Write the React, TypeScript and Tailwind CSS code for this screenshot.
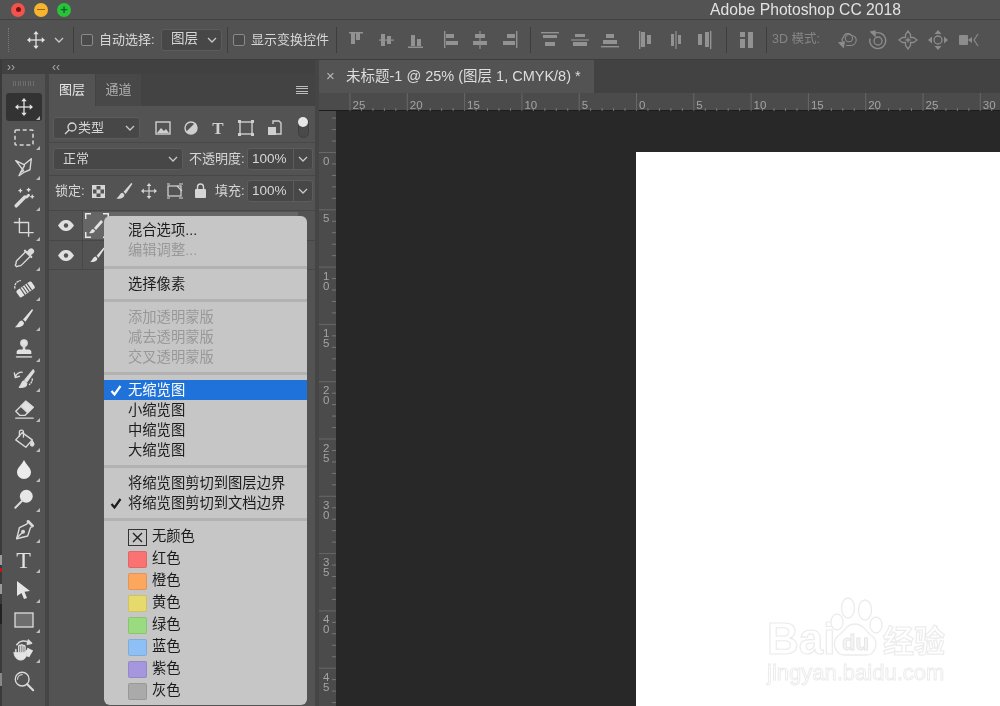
import React from "react";

const Chevron = ({ c = "#c8c8c8" }: { c?: string }) => (
  <svg width="10" height="6" viewBox="0 0 10 6" fill="none" stroke={c} strokeWidth="1.3"><path d="M1 1l4 4 4-4" /></svg>
);

const MoveIcon = ({ size = 20, c = "#e4e4e4" }: { size?: number; c?: string }) => (
  <svg width={size} height={size} viewBox="0 0 20 20" fill={c}>
    <rect x="9.300" y="3" width="1.400" height="14" />
    <rect x="3" y="9.300" width="14" height="1.400" />
    <path d="M10 0l3 3.600H7zM10 20l3-3.600H7zM0 10l3.600-3v6zM20 10l-3.600-3v6z" />
  </svg>
);

const S = ({ children, w = 22 }: { children: React.ReactNode; w?: number }) => (
  <svg width={w} height={w} viewBox="0 0 24 24" fill="none" stroke="#dadada" strokeWidth="1.500" strokeLinejoin="round" strokeLinecap="round">{children}</svg>
);

const Brush = ({ w = 22, c = "#e2e2e2" }: { w?: number; c?: string }) => (
  <svg width={w} height={w} viewBox="0 0 24 24" fill={c}>
    <path d="M21 2L11.500 13l2.500 2.500L22 3.500z" />
    <path d="M10.500 14c-3.500 0-3.500 4-7.500 7 5 1 9.500-1 9.500-4.500z" />
  </svg>
);

const tools: React.ReactNode[] = [
  <MoveIcon size={18} />,
  <svg width="20" height="17" viewBox="0 0 20 17" fill="none" stroke="#d8d8d8" strokeWidth="1.500"><rect x="1" y="1" width="18" height="15" rx="1" strokeDasharray="4 2.700" /></svg>,
  <S><path d="M3 5l9 4.500L20 3l-1.500 12-6 2.500-6 4 2-4 3-1.500z" /><path d="M8.500 17.500l4-7" /></S>,
  <S><path d="M3.500 20.500L13 11" strokeWidth="3.800" /><path d="M15 11l2-2" strokeWidth="3" /><path d="M17 1.500v3M15.500 3h3M8 2.500v3M6.500 4h3M21 9v3M19.500 10.500h3" /></S>,
  <S><path d="M7 1.500V17h15" /><path d="M1.500 6H17v15" /></S>,
  <S><path d="M14 5l-9.500 9.500c-1.500 1.500-1 3-1 3l-1 2.500 1.500 1.500 2.500-1s1.500.5 3-1L19 10" /><path d="M13 4l7 7M15.500 6.500l3-3.500c2-1.500 4.500 1 3 3L18 9" fill="#dadada" strokeWidth="2.200" /></S>,
  <S><g transform="rotate(-35 14 14)"><rect x="4" y="9" width="20" height="9" rx="2" fill="#e2e2e2" stroke="none" /><path d="M10 9.500v8M13 9.500v8M16 9.500v8M19 9.500v8" stroke="#535353" strokeWidth="1.200" /></g><path d="M2 12a7 7 0 0 1 6-8" strokeDasharray="1.500 2" /></S>,
  <Brush w={23} />,
  <S><circle cx="12" cy="5.500" r="3.500" fill="#e2e2e2" /><path d="M12 8v5" strokeWidth="2.800" /><path d="M4 15c0-2 2-2.500 4-2.500h8c2 0 4 .5 4 2.500v2.500H4z" fill="#e2e2e2" stroke="none" /><path d="M4 20.500h16" strokeWidth="2" stroke="#bcbcbc" /></S>,
  <S><path d="M22 2l-9 11 2 2 8-11z" fill="#e2e2e2" /><path d="M12 14c-2.500 0-2 4-5 7 5 .5 8-1 8-4z" fill="#e2e2e2" /><path d="M10 4.500C6 4.500 3.500 6.500 2.500 10M1.500 5.500l1 5 4.500-1.500" /><path d="M21 12c0 3-1 4-3 6" strokeDasharray="1.200 2" /></S>,
  <S><path d="M14 3.500l8 6.500-9 9H7.500L3 14.500z" /><path d="M14 3.500l8 6.500-6 6-7.500-7z" fill="#e2e2e2" /><path d="M3 22h19" /></S>,
  <S><path d="M10 5l11 8-7 8-11-8z" /><path d="M7 9V4.500a2.200 2.200 0 0 1 4.400 0V10" /><path d="M21 14c.8 1.600 2.200 2.800 1.500 4.500-1 2-3.500 1-3.200-1 .1-1.200 1-2.200 1.700-3.500z" fill="#e2e2e2" /></S>,
  <svg width="16" height="19" viewBox="0 0 16 19" fill="#ececec"><path d="M8 0c2.500 5 7 8 7 12.300a7 6.700 0 0 1-14 0C1 8 5.500 5 8 0z" /></svg>,
  <S><circle cx="14.500" cy="9" r="7" fill="#e6e6e6" stroke="none" /><path d="M10 14L2.500 21.500" strokeWidth="2.200" /></S>,
  <S><path d="M17 2l5 5-3 2.500-3 9-12 3 3-12 8-4z" /><path d="M4 21l6-6" /><circle cx="11" cy="14" r="1.400" fill="#dadada" /><path d="M16 2.500l5.500 5.500" strokeWidth="2.400" /></S>,
  <span className="[font-family:'Liberation_Serif',serif] text-[24px] leading-none text-[#e2e2e2]">T</span>,
  <svg width="15" height="18" viewBox="0 0 15 18" fill="#e6e6e6"><path d="M1 0l13 10-5.500.8L11 17l-3 1-2.500-6L1 15z" /></svg>,
  <svg width="20" height="16" viewBox="0 0 20 16"><rect x="1" y="1" width="18" height="14" fill="#6e6e6e" stroke="#dedede" strokeWidth="1.300" /></svg>,
  <S w={23}><path d="M4 14v-3M7 15V7.500c0-1.500 2.200-1.500 2.200 0M9.200 14V7c0-1.500 2.200-1.500 2.200 0M11.400 14V8c0-1.500 2.200-1.500 2.200 0v7" /><path d="M2 14c0 4 3 8 7 8s6-3 6.500-7L17 11v-1L13 14H3z" fill="#e4e4e4" strokeWidth="1" /><path d="M5 6a9 9 0 0 1 13-2" strokeWidth="1.600" /><path d="M17 1l3.500 3.500-4.500 1z" fill="#dadada" /><path d="M16 9l6 3-4 7-3-1z" fill="#e4e4e4" stroke="none" /></S>,
  <S><circle cx="10" cy="10" r="7.500" /><path d="M5 10a5 5 0 0 1 5-5" strokeWidth="1.200" /><path d="M15.500 15.500l6.500 6.500" strokeWidth="2.300" /></S>,
];

const A = ({ rects, line, dim = "#929292" }: { rects: number[][]; line?: number[]; dim?: string }) => (
  <svg width="20" height="20" viewBox="0 0 20 20" fill={dim}>
    {rects.map((r, i) => <rect key={i} x={r[0]} y={r[1]} width={r[2]} height={r[3]} />)}
    {line && <rect x={line[0]} y={line[1]} width={line[2]} height={line[3]} />}
  </svg>
);

const Cell = ({ children, ml = 0 }: { children: React.ReactNode; ml?: number }) => (
  <div className="flex h-5 w-[20px] shrink-0 items-center justify-center" style={{ marginLeft: ml }}>{children}</div>
);

const Sep = ({ ml }: { ml: number }) => <div className="h-[26px] w-px shrink-0 bg-[#3d3d3d]" style={{ marginLeft: ml }} />;

const Check = () => <div className="h-[12px] w-[12px] shrink-0 rounded-[2px] border border-[#8a8a8a] bg-[#4a4a4a]" />;

const field = "rounded-[3px] border border-[#5c5c5c] bg-[#474747]";

const PanelIcon = ({ children }: { children: React.ReactNode }) => (
  <svg width="18" height="18" viewBox="0 0 18 18" fill="none" stroke="#cfcfcf" strokeWidth="1.400">{children}</svg>
);

const Eye = () => (
  <svg width="16" height="11" viewBox="0 0 16 11"><path d="M0 5.500C3 1 5.500 0 8 0s5 1 8 5.500C13 10 10.500 11 8 11S3 10 0 5.500z" fill="#e0e0e0" /><circle cx="8" cy="5.500" r="2.200" fill="#535353" /></svg>
);

function HRuler() {
  const zero = 317;
  const labels = [25, 20, 15, 10, 5, 0, 5, 10, 15, 20, 25, 30];
  return (
    <svg width="681" height="18" className="block">
      {labels.map((l, i) => {
        const x = zero + (i - 5) * 57.3;
        return (
          <g key={i}>
            <rect x={x} y="0" width="1" height="18" fill="#686868" />
            {[1, 2, 3, 4].map((m) => <rect key={m} x={x + m * 11.46} y="15" width="1" height="3" fill="#767676" />)}
            <text x={x + 3} y="16" fontSize="11.500" fill="#a4a4a4" fontFamily="Liberation Sans">{l}</text>
          </g>
        );
      })}
    </svg>
  );
}

function VRuler() {
  const labels = ["0", "5", "10", "15", "20", "25", "30", "35", "40", "45"];
  return (
    <svg width="17" height="595" className="block">
      {[-3, -2, -1].map((m) => <rect key={m} x="13" y={41 + m * 11.46} width="4" height="1" fill="#767676" />)}
      {labels.map((l, i) => {
        const y = 41 + i * 57.3;
        return (
          <g key={l}>
            <rect x="0" y={y} width="17" height="1" fill="#686868" />
            {[1, 2, 3, 4].map((m) => <rect key={m} x="13" y={y + m * 11.46} width="4" height="1" fill="#767676" />)}
            {l.split("").map((d, k) => <text key={k} x="4" y={y + 13 + k * 10} fontSize="11.500" fill="#a4a4a4" fontFamily="Liberation Sans">{d}</text>)}
          </g>
        );
      })}
    </svg>
  );
}

const Item = ({ t, dis, sel, chk }: { t: string; dis?: boolean; sel?: boolean; chk?: boolean }) => (
  <div className={`relative flex h-5 items-center pl-6 text-[14.300px] leading-5 ${sel ? "bg-[#1f72d9] text-white" : dis ? "text-[#989898]" : "text-[#1c1c1c]"}`}>
    {chk && <svg className="absolute left-[6px] top-[5px]" width="12" height="11" viewBox="0 0 12 11" fill="none" stroke={sel ? "#fff" : "#1c1c1c"} strokeWidth="2.200"><path d="M1.500 6l3 3.500L10.500 1" /></svg>}
    {t}
  </div>
);

const MSep = ({ first }: { first?: boolean }) => (
  <div className={`flex items-center ${first ? "h-[14px]" : "h-[13px]"}`}><div className="h-[3px] w-full bg-[#b2b2b2]" /></div>
);

const Color = ({ c, t }: { c: string; t: string }) => (
  <div className="flex h-[22px] items-center pl-6 text-[14.300px] text-[#1c1c1c]">
    <div className="h-[17px] w-[19px] rounded-[2px] border border-black/10" style={{ background: c }} />
    <span className="ml-[5px]">{t}</span>
  </div>
);

function Menu() {
  return (
    <div className="absolute left-[104px] top-[216px] w-[203px] rounded-[6px] bg-[#c6c6c6] pb-[3px] pt-1">
      <Item t="混合选项..." />
      <Item t="编辑调整..." dis />
      <MSep first />
      <Item t="选择像素" />
      <MSep />
      <Item t="添加透明蒙版" dis />
      <Item t="减去透明蒙版" dis />
      <Item t="交叉透明蒙版" dis />
      <MSep />
      <Item t="无缩览图" sel chk />
      <Item t="小缩览图" />
      <Item t="中缩览图" />
      <Item t="大缩览图" />
      <MSep />
      <Item t="将缩览图剪切到图层边界" />
      <Item t="将缩览图剪切到文档边界" chk />
      <MSep />
      <div className="flex h-[22px] items-center pl-6 text-[14.300px] text-[#1c1c1c]">
        <div className="flex h-[17px] w-[19px] items-center justify-center border border-[#333]">
          <svg width="11" height="11" viewBox="0 0 11 11" stroke="#222" strokeWidth="1.400"><path d="M1 1l9 9M10 1l-9 9" /></svg>
        </div>
        <span className="ml-[5px]">无颜色</span>
      </div>
      <Color c="#fb7272" t="红色" />
      <Color c="#fca65e" t="橙色" />
      <Color c="#e6da6c" t="黄色" />
      <Color c="#9adb80" t="绿色" />
      <Color c="#8fc0f5" t="蓝色" />
      <Color c="#a596de" t="紫色" />
      <Color c="#aaaaaa" t="灰色" />
    </div>
  );
}

const Outline = "text-white [-webkit-text-stroke:1.200px_#ececec]";

function Watermark() {
  return (
    <div className="absolute left-[767px] top-[597px] h-[90px] w-[185px]">
      <span className={`absolute left-0 top-[20px] [font-family:'Liberation_Sans',sans-serif] text-[44px] font-bold leading-[44px] ${Outline}`}>Bai</span>
      <svg className="absolute left-[63px] top-0" width="54" height="62" viewBox="0 0 54 62" fill="#fff" stroke="#ececec" strokeWidth="1.300">
        <ellipse cx="7" cy="25" rx="6" ry="8" />
        <ellipse cx="18" cy="11" rx="6.500" ry="10" />
        <ellipse cx="35" cy="13" rx="6.500" ry="10" />
        <ellipse cx="46" cy="28" rx="6" ry="8" />
        <path d="M25 27c9 0 11 8 17 12 7 5 4 19-6 19H15C5 58 1 45 8 39c6-4 8-12 17-12z" />
        <text x="12" y="53" fontSize="22" fontWeight="bold" fill="#f4f4f4" stroke="#e4e4e4" strokeWidth="0.800" fontFamily="Liberation Sans">du</text>
      </svg>
      <span className={`absolute left-[116px] top-[24px] [font-family:'Noto_Sans_CJK_SC',sans-serif] text-[31px] font-bold leading-[36px] ${Outline}`}>经验</span>
      <span className="absolute left-0 top-[63px] [font-family:'Liberation_Sans',sans-serif] text-[22px] leading-[26px] text-white [-webkit-text-stroke:1px_#ececec]">jingyan.baidu.com</span>
    </div>
  );
}

function EdgeMarks() {
  return (
    <div className="absolute left-0 top-[555px] flex w-[2px] flex-col">
      <div className="h-[10px] bg-[#9a9a9a]" />
      <div className="mt-[3px] h-[4px] bg-[#c01818]" />
      <div className="mt-[12px] h-[10px] bg-[#9a9a9a]" />
      <div className="mt-[10px] h-[20px] bg-[#222222]" />
      <div className="mt-[49px] h-[13px] bg-[#888888]" />
    </div>
  );
}

export default function App() {
  return (
    <div className="relative flex h-[706px] w-[1000px] flex-col overflow-hidden bg-[#535353] [font-family:'Liberation_Sans','Noto_Sans_CJK_SC',sans-serif] text-[#d6d6d6] blur-[0.4px]">
      {/* title bar */}
      <div className="flex h-5 items-center border-b border-[#414141] bg-[#535353] pl-[11px]">
        <div className="flex h-[14px] w-[14px] items-center justify-center rounded-full bg-[#f2544d]"><div className="h-[5px] w-[5px] rounded-full bg-[#7a1010]" /></div>
        <div className="ml-[9px] flex h-[14px] w-[14px] items-center justify-center rounded-full bg-[#f7b52f]"><div className="h-[1.500px] w-[8px] bg-[#9a6408]" /></div>
        <div className="ml-[9px] flex h-[14px] w-[14px] items-center justify-center rounded-full bg-[#29c23d]"><span className="text-[13px] font-bold leading-none text-[#0c6a18]">+</span></div>
        <span className="ml-auto mr-[99px] text-[15.700px] text-[#e2e2e2]">Adobe Photoshop CC 2018</span>
      </div>
      {/* options bar */}
      <div className="flex h-[40px] items-center border-b border-[#3c3c3c] bg-[#525252]">
        <div className="ml-[8px] h-[24px] w-[2px] shrink-0 border-l border-dotted border-[#7a7a7a]" />
        <div className="ml-[17px] shrink-0"><MoveIcon size={18} /></div>
        <div className="ml-[9px] shrink-0"><Chevron /></div>
        <Sep ml={9} />
        <div className="ml-[7px]"><Check /></div>
        <span className="ml-[6px] w-[56px] shrink-0 whitespace-nowrap text-[13px]">自动选择:</span>
        <div className={`ml-[6px] flex h-[22px] w-[61px] shrink-0 items-center justify-between pl-[9px] pr-[4px] text-[13.500px] ${field}`}>图层<Chevron /></div>
        <Sep ml={5} />
        <div className="ml-[5px]"><Check /></div>
        <span className="ml-[6px] w-[78px] shrink-0 whitespace-nowrap text-[13px]">显示变换控件</span>
        <Sep ml={7} />
        <Cell ml={12}><A rects={[[2, 3, 4, 11], [7, 3, 4, 7]]} line={[0, 2, 14, 1.5]} /></Cell>
        <Cell ml={9}><A rects={[[3, 4, 4, 12], [9, 6, 4, 8]]} line={[1, 9.5, 15, 1.2]} /></Cell>
        <Cell ml={10}><A rects={[[3, 5, 4, 11], [9, 9, 4, 7]]} line={[0, 16.5, 15, 1.5]} /></Cell>
        <Cell ml={15}><A rects={[[3, 4, 8, 4], [3, 11, 12, 4]]} line={[1, 1, 1.4, 17]} /></Cell>
        <Cell ml={7}><A rects={[[5, 4, 10, 4], [3, 11, 14, 4]]} line={[9.4, 1, 1.2, 18]} /></Cell>
        <Cell ml={9}><A rects={[[8, 4, 8, 4], [4, 11, 12, 4]]} line={[17, 1, 1.4, 17]} /></Cell>
        <Sep ml={11} />
        <Cell ml={9}><A rects={[[3, 5, 14, 3], [5, 12, 10, 4]]} line={[1, 2, 18, 1.4]} /></Cell>
        <Cell ml={10}><A rects={[[5, 4, 10, 3], [3, 12, 14, 4]]} line={[1, 9.4, 18, 1.2]} /></Cell>
        <Cell ml={10}><A rects={[[6, 4, 8, 4], [3, 10, 14, 4]]} line={[1, 16, 18, 1.4]} /></Cell>
        <Cell ml={16}><A rects={[[5, 2, 4, 15], [11, 5, 4, 9]]} line={[3, 1, 1.4, 18]} /></Cell>
        <Cell ml={10}><A rects={[[5, 4, 3, 12], [12, 5, 3, 9]]} line={[9.4, 1, 1.2, 18]} /></Cell>
        <Cell ml={8}><A rects={[[4, 4, 4, 11], [11, 2, 4, 15]]} line={[16, 1, 1.4, 18]} /></Cell>
        <Sep ml={12} />
        <Cell ml={10}><A rects={[[3, 2, 5, 5], [3, 9, 5, 9], [11, 2, 5, 16]]} /></Cell>
        <Sep ml={9} />
        <span className="ml-[5px] w-[52px] shrink-0 text-[12.500px] text-[#858585]">3D 模式:</span>
        <Cell ml={14}><svg width="22" height="18" viewBox="0 0 22 18" fill="none" stroke="#8c8c8c" strokeWidth="1.200"><path d="M5 11a4 4 0 0 1 1-5 5 5 0 0 1 9-2c3 0 5 2.500 5 5 0 3-2 6-6 6H9" /><path d="M1 12l6-1-1 6z" fill="#8c8c8c" /><circle cx="12" cy="7" r="4" /></svg></Cell>
        <Cell ml={10}><svg width="20" height="20" viewBox="0 0 20 20" fill="none" stroke="#8c8c8c" strokeWidth="1.300"><circle cx="10" cy="11" r="4" /><path d="M6 3.500a8 8 0 1 1-4 5" /><path d="M3 2l4-1 0 5z" fill="#8c8c8c" /></svg></Cell>
        <Cell ml={10}><svg width="20" height="20" viewBox="0 0 20 20" fill="none" stroke="#8c8c8c" strokeWidth="1.300"><path d="M7.500 7.500V4.500L10 1l2.500 3.500v3h3L19 10l-3.500 2.500h-3v3L10 19l-2.500-3.500v-3h-3L1 10l3.500-2.500z" /><path d="M7.500 10h5M10 7.500v5" /></svg></Cell>
        <Cell ml={10}><svg width="20" height="20" viewBox="0 0 20 20" fill="#8c8c8c"><path d="M10 0l3.500 4h-7zM10 20l3.500-4h-7zM0 10l4-3.500v7zM20 10l-4-3.500v7z" /><circle cx="10" cy="10" r="4" fill="none" stroke="#8c8c8c" strokeWidth="1.300" /></svg></Cell>
        <Cell ml={11}><svg width="20" height="14" viewBox="0 0 20 14" fill="#8c8c8c"><rect x="0" y="2" width="9" height="10" rx="1" /><path d="M9 7l4-3v6z" /><path d="M19 1l-4 6 4 6" stroke="#8c8c8c" fill="none" strokeWidth="1.200" /></svg></Cell>
      </div>
      {/* main */}
      <div className="flex min-h-0 flex-1">
        <div className="flex w-[315px] shrink-0 flex-col border-l-2 border-[#3a3a3a]">
          <div className="flex h-[14px] shrink-0 items-center bg-[#414141] text-[12px] leading-none text-[#a8a8a8]">
            <span className="ml-[5px]">››</span>
            <span className="ml-[37px]">‹‹</span>
          </div>
          <div className="flex min-h-0 flex-1">
            {/* tools */}
            <div className="w-[43px] shrink-0 bg-[#535353]">
              <div className="mx-auto flex h-[19px] w-[22px] items-center"><div className="h-[5px] w-full bg-[repeating-linear-gradient(90deg,#6e6e6e_0,#6e6e6e_1px,transparent_1px,transparent_2.500px)]" /></div>
              {tools.map((t, i) => (
                <div key={i} className="flex h-[30.200px] items-start justify-center">
                  <div className={`relative flex h-[28px] w-[36px] items-center justify-center ${i === 0 ? "rounded-[3px] bg-[#333333]" : ""}`}>
                    {t}
                    {i !== 19 && <div className="absolute bottom-[1px] right-[2px] h-0 w-0 border-b-[4px] border-l-[4px] border-b-[#bcbcbc] border-l-transparent" />}
                  </div>
                </div>
              ))}
            </div>
            <div className="w-1 shrink-0 bg-[#454545]" />
            {/* layers panel */}
            <div className="flex w-[266px] shrink-0 flex-col bg-[#535353]">
              <div className="flex h-[32px] shrink-0 items-stretch bg-[#434343] text-[13px]">
                <div className="flex w-[46px] items-center justify-center bg-[#535353] text-[#e6e6e6]">图层</div>
                <div className="ml-px flex w-[45px] items-center justify-center bg-[#484848] text-[#b0b0b0]">通道</div>
                <div className="ml-auto mr-[7px] flex w-[12px] flex-col justify-center gap-[1.500px]">
                  <div className="h-px bg-[#bdbdbd]" /><div className="h-px bg-[#bdbdbd]" /><div className="h-px bg-[#bdbdbd]" /><div className="h-px bg-[#bdbdbd]" />
                </div>
              </div>
              <div className="flex h-[37px] shrink-0 items-start border-b border-[#474747] pl-1 pt-[11px]">
                <div className={`flex h-[22px] w-[87px] shrink-0 items-center pl-[10px] pr-[4px] text-[13px] ${field}`}>
                  <svg width="13" height="13" viewBox="0 0 13 13" fill="none" stroke="#d8d8d8" strokeWidth="1.300"><circle cx="8" cy="5" r="4" /><path d="M5 8l-4 4" /></svg>
                  <span className="ml-px">类型</span><span className="ml-auto"><Chevron /></span>
                </div>
                <div className="ml-[14px] mt-[2px]"><PanelIcon><rect x="2" y="3" width="14" height="12" /><path d="M3 14l4-5 3 3 2-2 3 4z" fill="#cfcfcf" stroke="none" /></PanelIcon></div>
                <div className="ml-[10px] mt-[2px]"><PanelIcon><circle cx="9" cy="9" r="6" /><path d="M13.200 4.800L4.800 13.200A6 6 0 0 0 13.200 4.800z" fill="#cfcfcf" /></PanelIcon></div>
                <span className="ml-[9px] mt-[3px] w-[18px] text-center [font-family:'Liberation_Serif',serif] text-[17px] font-bold leading-none text-[#cfcfcf]">T</span>
                <div className="ml-[10px] mt-[2px]"><PanelIcon><rect x="3" y="3" width="12" height="12" /><path d="M1 1h3v3H1zM14 1h3v3h-3zM1 14h3v3H1zM14 14h3v3h-3z" fill="#cfcfcf" stroke="none" /></PanelIcon></div>
                <div className="ml-[10px] mt-[2px]"><PanelIcon><path d="M8 5V2h6l2 2v11h-6" /><rect x="3" y="8" width="8" height="8" fill="#cfcfcf" stroke="none" /></PanelIcon></div>
                <div className="relative ml-[15px] h-[21px] w-[11px] rounded-full border border-[#3f3f3f] bg-[#4a4a4a]">
                  <div className="absolute -left-px -top-px h-[10px] w-[10px] rounded-full bg-[#e6e6e6]" />
                </div>
              </div>
              <div className="flex h-[33px] shrink-0 items-start border-b border-[#474747] pl-1 pt-[5px] text-[13px]">
                <div className={`flex h-[22px] w-[130px] shrink-0 items-center justify-between pl-[9px] pr-[4px] ${field}`}>正常<Chevron /></div>
                <span className="ml-[6px] w-[55px] shrink-0 whitespace-nowrap leading-[22px]">不透明度:</span>
                <div className={`ml-[3px] flex h-[22px] w-[66px] shrink-0 items-center ${field}`}>
                  <span className="w-[45px] pl-[4px] text-[13.500px]">100%</span>
                  <div className="flex h-full flex-1 items-center justify-center border-l border-[#5c5c5c]"><Chevron /></div>
                </div>
              </div>
              <div className="flex h-[35px] shrink-0 items-start border-b border-[#474747] pl-[6px] pt-[4px] text-[13px]">
                <span className="w-[36px] shrink-0 leading-[22px]">锁定:</span>
                <svg width="13" height="13" viewBox="0 0 13 13" fill="#d6d6d6" className="ml-[1px] mt-[5px] shrink-0"><rect x=".5" y=".5" width="12" height="12" fill="none" stroke="#d6d6d6" /><path d="M1 1h3.500v3.500H1zM8.500 1H12v3.500H8.500zM4.500 4.500h4v4h-4zM1 8.500h3.500V12H1zM8.500 8.500H12V12H8.500z" /></svg>
                <div className="ml-[9px] mt-px shrink-0"><Brush w={20} c="#d6d6d6" /></div>
                <div className="ml-[7px] mt-[3px] shrink-0"><MoveIcon size={16} c="#d6d6d6" /></div>
                <svg width="18" height="16" viewBox="0 0 18 16" fill="none" stroke="#d6d6d6" strokeWidth="1.200" className="ml-[9px] mt-[3px] shrink-0"><rect x="2" y="3" width="13" height="10" /><path d="M1 1h3M13 1h4M1 15h3M13 15h4M11 3l5 5" /></svg>
                <svg width="13" height="15" viewBox="0 0 13 15" fill="#d6d6d6" className="ml-[10px] mt-[3px] shrink-0"><rect x="1" y="6" width="11" height="9" rx="1" /><path d="M3.500 6V4a3 3 0 0 1 6 0v2" fill="none" stroke="#d6d6d6" strokeWidth="1.400" /></svg>
                <span className="ml-[8px] w-[29px] shrink-0 whitespace-nowrap leading-[22px]">填充:</span>
                <div className={`ml-[3px] flex h-[22px] w-[66px] shrink-0 items-center ${field}`}>
                  <span className="w-[45px] pl-[4px] text-[13.500px]">100%</span>
                  <div className="flex h-full flex-1 items-center justify-center border-l border-[#5c5c5c]"><Chevron /></div>
                </div>
              </div>
              <div className="flex h-[30px] shrink-0 border-b border-[#474747]">
                <div className="flex w-[34px] items-center justify-center border-r border-[#474747]"><Eye /></div>
                <div className="my-px mr-[17px] flex flex-1 items-center bg-[#666666] pl-[2px]">
                  <svg width="24" height="25" viewBox="0 0 24 25" fill="none" stroke="#e8e8e8" strokeWidth="1.500"><path d="M0.700 6V.700H6M18 .700h5.300V6M.7 19v5.300H6M18 24.300h5.300V19" /><path d="M16 7L9 15l2 2 7-8z" fill="#e4e4e4" stroke="none" /><path d="M8 16c-2 0-2 3-4 4 3 1 6-.5 6-2.500z" fill="#e4e4e4" stroke="none" /></svg>
                </div>
              </div>
              <div className="flex h-[29px] shrink-0 border-b border-[#474747]">
                <div className="flex w-[34px] items-center justify-center border-r border-[#474747]"><Eye /></div>
                <div className="flex flex-1 items-center pl-[5px]"><Brush w={18} /></div>
              </div>
            </div>
          </div>
        </div>
        <div className="w-1 shrink-0 bg-[#454545]" />
        {/* document */}
        <div className="flex min-w-0 flex-1 flex-col">
          <div className="flex h-[33px] shrink-0 bg-[#424242]">
            <div className="flex w-[275px] items-center bg-[#535353] text-[#dedede]">
              <span className="ml-[7px] w-[20px] shrink-0 text-[15px] text-[#b8b8b8]">×</span>
              <span className="whitespace-nowrap text-[14.500px]">未标题-1 @ 25% (图层 1, CMYK/8) *</span>
            </div>
          </div>
          <div className="flex h-[18px] shrink-0 border-b border-[#1c1c1c] bg-[#4b4b4b]">
            <HRuler />
          </div>
          <div className="flex min-h-0 flex-1">
            <div className="w-[17px] shrink-0 overflow-hidden bg-[#4b4b4b]"><VRuler /></div>
            <div className="flex min-w-0 flex-1 flex-col bg-[#282828] pl-[300px] pt-[41px]">
              <div className="flex-1 bg-white" />
            </div>
          </div>
        </div>
      </div>
      <EdgeMarks />
      <Menu />
      <Watermark />
    </div>
  );
}
